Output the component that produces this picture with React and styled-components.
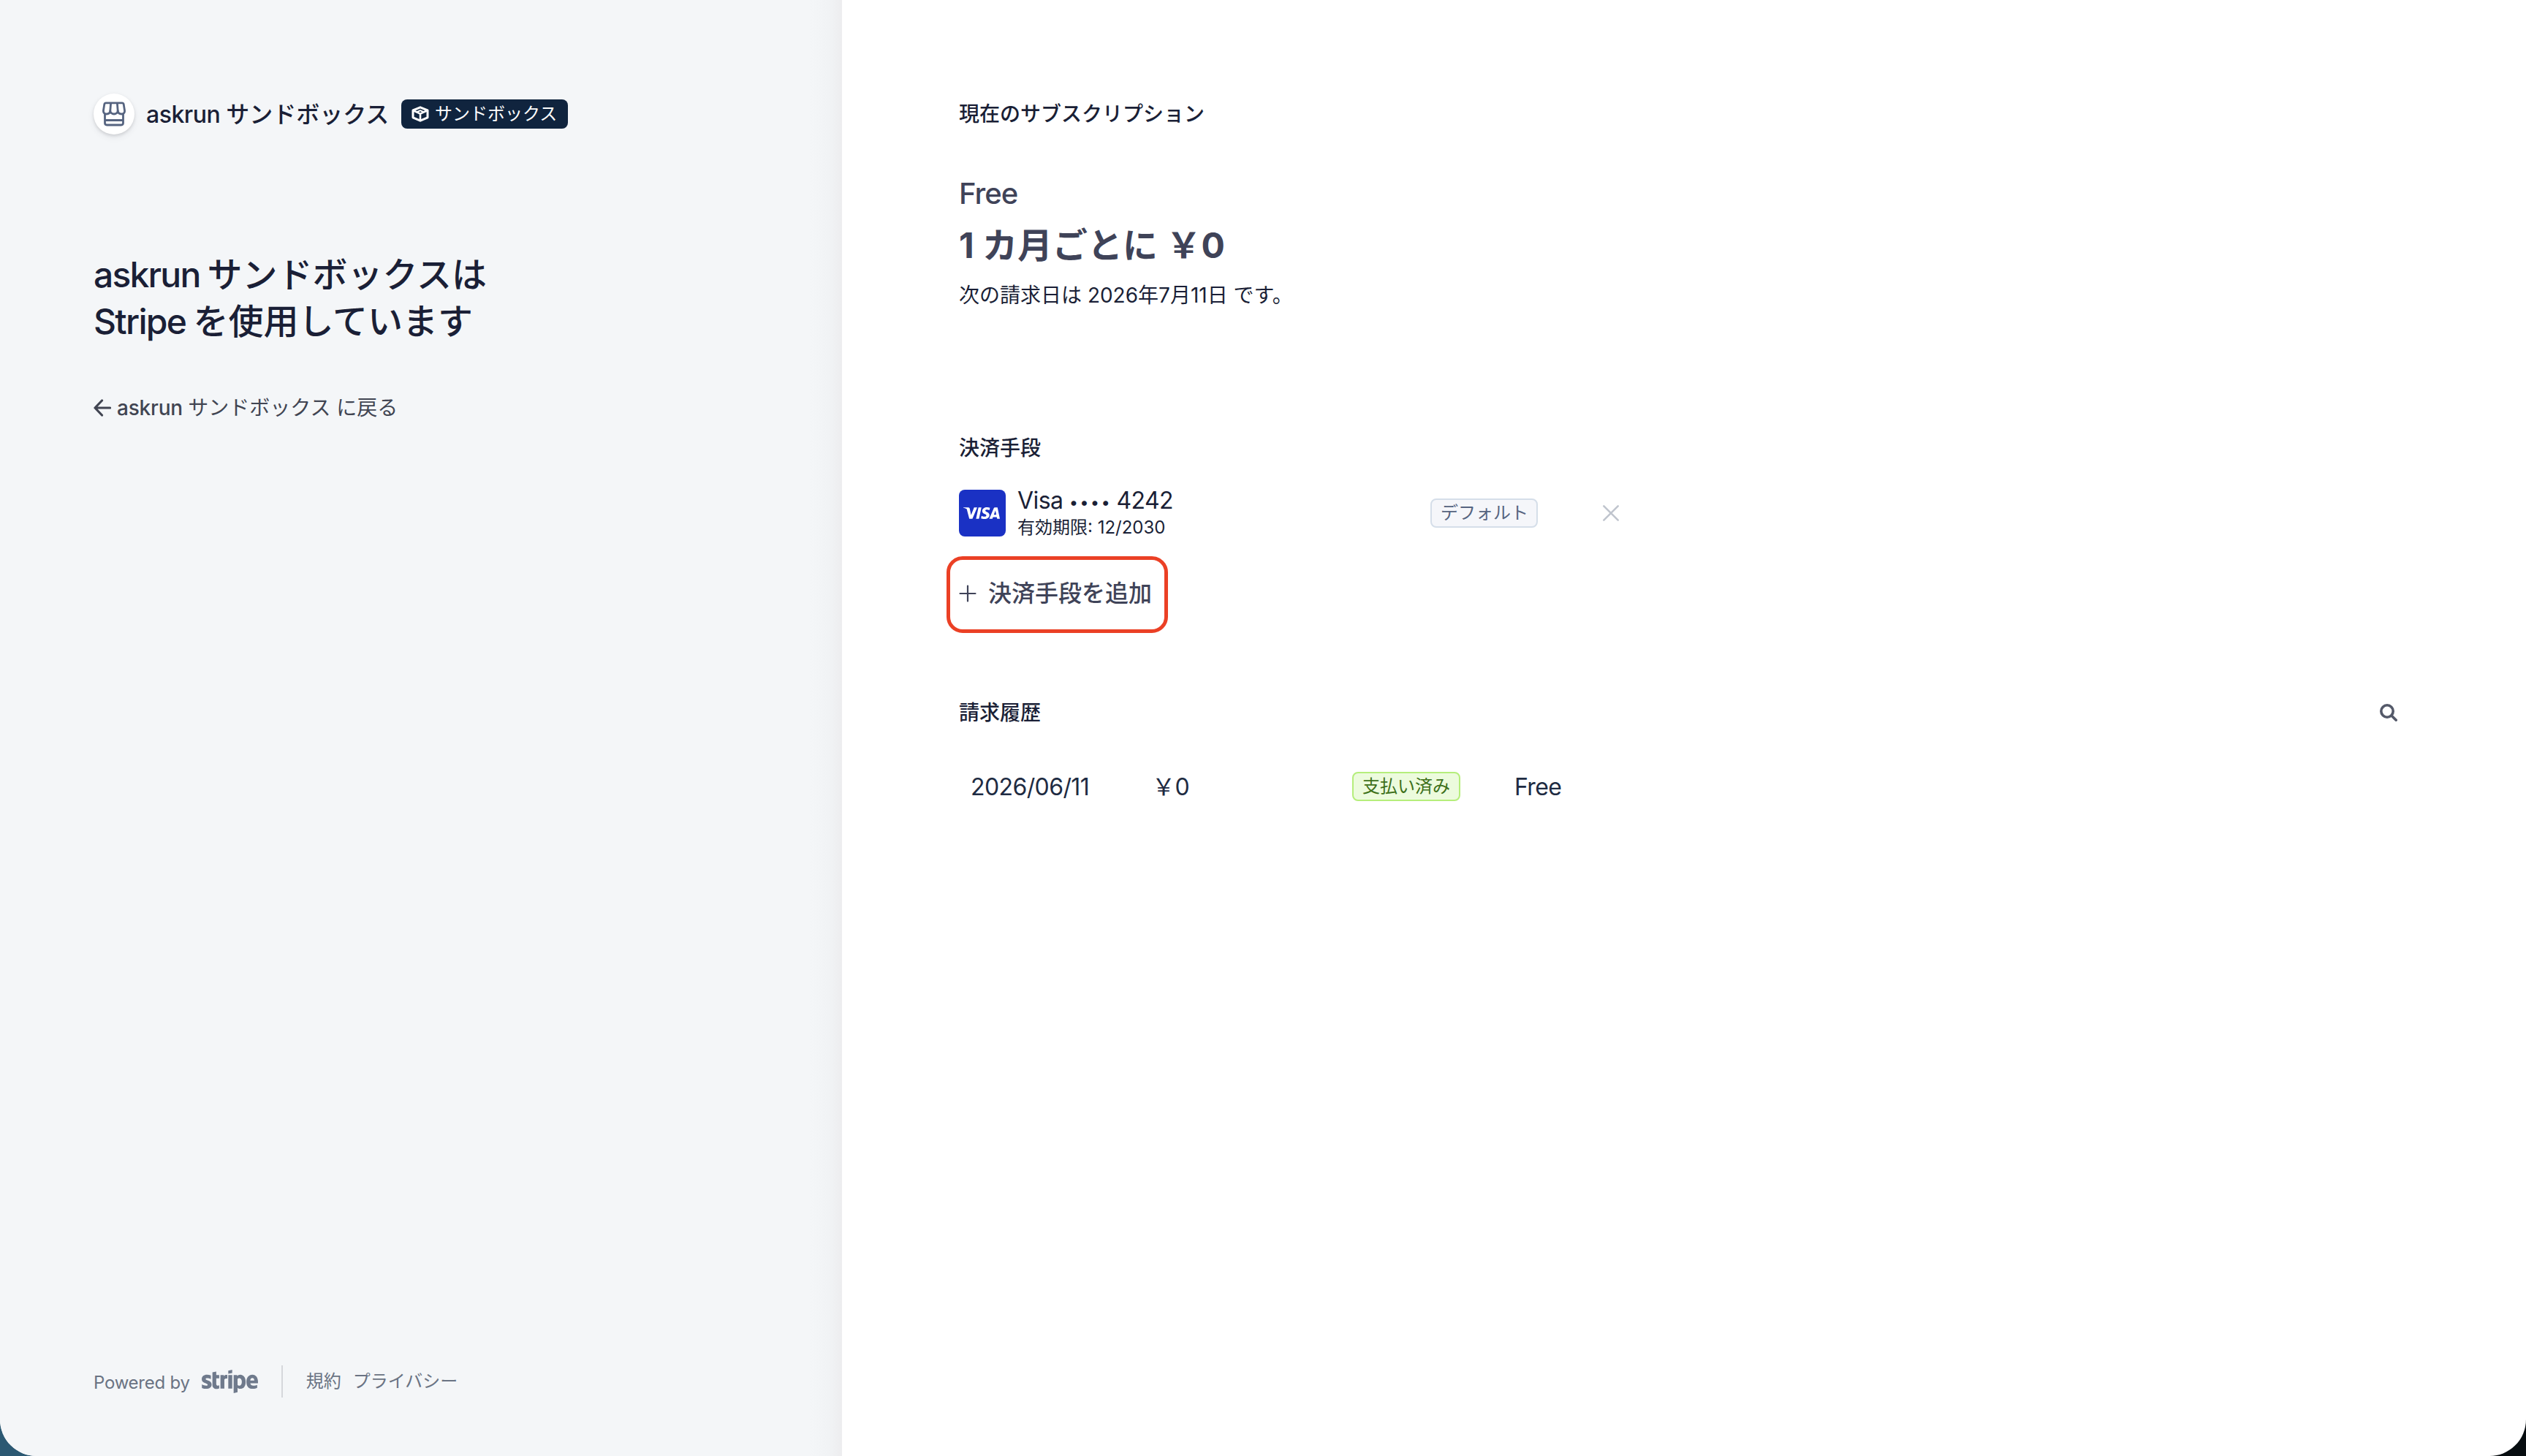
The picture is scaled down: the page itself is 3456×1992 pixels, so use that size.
import React from "react";
import styled, { createGlobalStyle } from "styled-components";
import { FaStripe } from "react-icons/fa";
import { SiVisa } from "react-icons/si";

const GlobalStyle = createGlobalStyle`
  * {
    box-sizing: border-box;
  }

  body {
    margin: 0;
    background: linear-gradient(90deg, #2b5872 0%, #2b5872 50%, #070d10 50%);
    font-family: Inter, "Noto Sans CJK JP", sans-serif;
    color: #1a1f36;
  }
`

const ShopIcon = () => (
    <svg width="32" height="34" viewBox="0 0 32 34" fill="none" stroke="#566480" strokeWidth="2.800" strokeLinecap="round" strokeLinejoin="round">
        <path d="M5 1.800h22c1.200 0 2 .7 2.200 1.800l1.300 8.400c.4 3-1.300 5-4.200 5-2.900 0-4.900-1.800-5.100-4.300-.2 2.500-2.400 4.300-5.200 4.300s-5-1.800-5.200-4.300c-.2 2.500-2.200 4.300-5.100 4.300-2.900 0-4.600-2-4.200-5l1.300-8.400c.2-1.100 1-1.800 2.200-1.800z"/>
        <path d="M11.600 2.500l-.8 10.200M20.400 2.500l.8 10.200"/>
        <path d="M3.500 17v12.300c0 1.700 1 2.700 2.700 2.700h19.600c1.700 0 2.700-1 2.700-2.700V17M3.500 25.500h25"/>
    </svg>
)

const CubeIcon = () => (
    <svg width="24" height="22" viewBox="0 0 24 22" fill="none" stroke="#fff" strokeWidth="3" strokeLinejoin="round">
        <path d="M12 1.800l10 4.200v9.800l-10 4.400-10-4.400V6z"/>
        <path d="M2 6l10 4.600L22 6M12 10.600v9.600" strokeWidth="2.600"/>
        <path d="M7 8.500l5-2.300 5 2.300" strokeWidth="2"/>
    </svg>
)

const ArrowIcon = () => (
    <svg width="24" height="24" viewBox="0 0 24 24" fill="none" stroke="#414552" strokeWidth="3.200" strokeLinecap="round" strokeLinejoin="round">
        <path d="M11.500 2L2 12l9.500 10M2 12h20.500"/>
    </svg>
)

const PlusIcon = () => (
    <svg width="24" height="24" viewBox="0 0 24 24" fill="none" stroke="#3f4358" strokeWidth="2.200" strokeLinecap="round">
        <path d="M12 1.500v21M1.500 12h21"/>
    </svg>
)

const CloseIcon = () => (
    <svg width="24" height="24" viewBox="0 0 24 24" fill="none" stroke="#c0c5ce" strokeWidth="2.600" strokeLinecap="round">
        <path d="M2.300 2.300l19.400 19.400M21.700 2.300L2.300 21.700"/>
    </svg>
)

const SearchIcon = () => (
    <svg width="24" height="24" viewBox="0 0 24 24" fill="none" stroke="#545969" strokeWidth="3.600" strokeLinecap="round">
        <circle cx="10" cy="10" r="8.200"/>
        <path d="M16.200 16.200l6 6"/>
    </svg>
)

const invoices = [
    { date: "2026/06/11", amount: "￥0", status: "支払い済み", name: "Free" },
]

export default function App() {
    return (
        <Page>
            <GlobalStyle/>
            <Sidebar>
                <Brand>
                    <Avatar><ShopIcon/></Avatar>
                    <BrandName><Latin $spacing="-0.5px">askrun </Latin>サンドボックス</BrandName>
                    <SandboxBadge><CubeIcon/>サンドボックス</SandboxBadge>
                </Brand>
                <Headline>
                    <Latin $spacing="-1.8px" $word="-1px">askrun </Latin>サンドボックスは<br/>
                    <Latin $spacing="-1.7px" $word="-1px">Stripe </Latin>を使用しています
                </Headline>
                <BackLink>
                    <ArrowIcon/>
                    <span><strong>askrun </strong>サンドボックス に戻る</span>
                </BackLink>
                <Footer>
                    <PoweredBy>Powered by</PoweredBy>
                    <StripeLogo viewBox="0 124 640 264" preserveAspectRatio="none"/>
                    <Divider/>
                    <FooterLinks>
                        <span>規約</span>
                        <span>プライバシー</span>
                    </FooterLinks>
                </Footer>
            </Sidebar>
            <Main>
                <Subscription>
                    <SectionTitle>現在のサブスクリプション</SectionTitle>
                    <PlanName>Free</PlanName>
                    <Price>1 カ月ごとに ￥0</Price>
                    <NextBill>次の請求日は 2026年7月11日 です。</NextBill>
                </Subscription>
                <Payment>
                    <SectionTitle>決済手段</SectionTitle>
                    <Card>
                        <CardBrand><VisaLogo viewBox="0 8.100 24 7.800" preserveAspectRatio="none"/></CardBrand>
                        <CardInfo>
                            <CardNumber>Visa <Dots>••••</Dots> 4242</CardNumber>
                            <CardExpiry>有効期限: 12/2030</CardExpiry>
                        </CardInfo>
                        <Badge>デフォルト</Badge>
                        <CloseIcon/>
                    </Card>
                    <AddButton><PlusIcon/>決済手段を追加</AddButton>
                </Payment>
                <History>
                    <HistoryHeader>
                        <SectionTitle>請求履歴</SectionTitle>
                        <SearchIcon/>
                    </HistoryHeader>
                    {invoices.map(invoice => (
                        <Invoice key={invoice.date}>
                            <Cell>{invoice.date}</Cell>
                            <Cell>{invoice.amount}</Cell>
                            <Badge $paid>{invoice.status}</Badge>
                            <Cell>{invoice.name}</Cell>
                        </Invoice>
                    ))}
                </History>
            </Main>
        </Page>
    )
}

const Page = styled.div`
  display: flex;
  width: 3456px;
  height: 1992px;
  border-radius: 0 0 50px 50px;
  overflow: hidden;
  background: #fff;
`

const Sidebar = styled.aside`
  display: flex;
  flex-direction: column;
  width: 1152px;
  padding: 128px 0 80px 128px;
  background: linear-gradient(90deg, #f4f6f8 0, #f4f6f8 1108px, #f1f3f5 1134px, #ededef 1152px);
`

const Latin = styled.span`
  letter-spacing: ${props => props.$spacing};
  word-spacing: ${props => props.$word || "0"};
`

const Brand = styled.div`
  display: flex;
  align-items: center;
  height: 56px;
`

const Avatar = styled.div`
  display: flex;
  align-items: center;
  justify-content: center;
  width: 56px;
  height: 56px;
  border-radius: 50%;
  background: #fff;
  box-shadow: 0 2px 4px rgba(0, 0, 0, 0.12), 0 4px 10px rgba(60, 66, 87, 0.08);
`

const BrandName = styled.div`
  width: 349px;
  margin-left: 16px;
  padding-top: 2px;
  font-size: 32px;
  font-weight: 500;
  line-height: 40px;
  white-space: nowrap;
`

const SandboxBadge = styled.div`
  display: flex;
  align-items: center;
  gap: 8px;
  width: 228px;
  height: 40px;
  padding-left: 14px;
  border-radius: 8px;
  background: #10243e;
  color: #fff;
  font-size: 24px;
  line-height: 40px;
  white-space: nowrap;
`

const Headline = styled.h1`
  margin: 160px 0 0;
  font-size: 48px;
  font-weight: 500;
  line-height: 64px;
`

const BackLink = styled.div`
  display: flex;
  align-items: center;
  gap: 8px;
  height: 40px;
  margin-top: 66px;
  color: #414552;
  font-size: 28px;
  line-height: 40px;

  strong {
    font-weight: 500;
    letter-spacing: -0.2px;
  }
`

const Footer = styled.footer`
  display: flex;
  align-items: center;
  height: 44px;
  margin-top: auto;
  color: #6a7383;
  font-size: 24px;
  line-height: 44px;
`

const PoweredBy = styled.span`
  padding-top: 3px;
  letter-spacing: -0.25px;
`

const StripeLogo = styled(FaStripe)`
  width: 77px;
  height: 32px;
  margin-left: 16px;
  color: #6f7a8c;
`

const Divider = styled.div`
  width: 2px;
  height: 44px;
  margin: 0 32px;
  background: #d5d7db;
`

const FooterLinks = styled.div`
  display: flex;
  gap: 16px;
`

const Main = styled.main`
  display: flex;
  flex-direction: column;
  width: 2304px;
  padding: 136px 176px 0 160px;
`

const Subscription = styled.section`
  height: 457px;
`

const Payment = styled.section`
  height: 362px;
`

const History = styled.section`
  display: flex;
  flex-direction: column;
`

const SectionTitle = styled.h2`
  margin: 0;
  font-size: 28px;
  font-weight: 500;
  line-height: 40px;
`

const PlanName = styled.div`
  margin-top: 63px;
  color: #3f4358;
  font-size: 40px;
  font-weight: 500;
  line-height: 52px;
  letter-spacing: -1px;
`

const Price = styled.div`
  margin-top: 13px;
  color: #3f4358;
  font-size: 48px;
  font-weight: 700;
  line-height: 64px;
`

const NextBill = styled.div`
  margin-top: 16px;
  font-size: 28px;
  line-height: 40px;
`

const Card = styled.div`
  display: grid;
  grid-template-columns: 64px 581px 147px auto;
  grid-template-rows: 64px;
  align-items: center;
  height: 64px;
  margin-top: 37px;

  > :nth-child(2) {
    padding-left: 16px;
  }

  > :nth-child(4) {
    margin-left: 88px;
  }
`

const CardBrand = styled.div`
  display: flex;
  align-items: center;
  justify-content: center;
  width: 64px;
  height: 64px;
  border-radius: 8px;
  background: #1a31c4;
`

const VisaLogo = styled(SiVisa)`
  width: 50px;
  height: 16px;
  margin-right: 2px;
  color: #fff;
`

const CardInfo = styled.div`
  padding-bottom: 1px;
`

const CardNumber = styled.div`
  font-size: 32px;
  line-height: 40px;
  letter-spacing: -0.6px;
`

const Dots = styled.span`
  margin-right: -2px;
  font-size: 22px;
  line-height: 1;
  letter-spacing: 2.2px;
  vertical-align: 1px;
`

const CardExpiry = styled.div`
  font-size: 24px;
  line-height: 34px;
`

const Badge = styled.div`
  width: ${props => props.$paid ? "148px" : "147px"};
  height: 40px;
  padding-left: 12px;
  border: 2px solid ${props => props.$paid ? "#b5ee7b" : "#d5dee9"};
  border-radius: 8px;
  background: ${props => props.$paid ? "#ecfbdd" : "#f5f6fa"};
  color: ${props => props.$paid ? "#3d7019" : "#566480"};
  font-size: 24px;
  line-height: 36px;
  white-space: nowrap;
`

const AddButton = styled.div`
  display: flex;
  align-items: center;
  gap: 16px;
  width: 303px;
  height: 105px;
  margin: 27px 0 0 -17px;
  padding: 0 0 4px 12px;
  border: 5px solid #eb4025;
  border-radius: 22px;
  color: #3f4358;
  font-size: 32px;
  font-weight: 500;
  line-height: 40px;
  white-space: nowrap;
`

const HistoryHeader = styled.div`
  display: flex;
  align-items: center;
  justify-content: space-between;
`

const Invoice = styled.div`
  display: grid;
  grid-template-columns: 248px 274px 222px auto;
  align-items: center;
  height: 40px;
  margin-top: 60px;
  padding-left: 16px;
  color: #1e2b42;
  font-size: 32px;
  line-height: 40px;
`

const Cell = styled.span`
  padding-top: 2px;
  letter-spacing: -0.6px;
`
